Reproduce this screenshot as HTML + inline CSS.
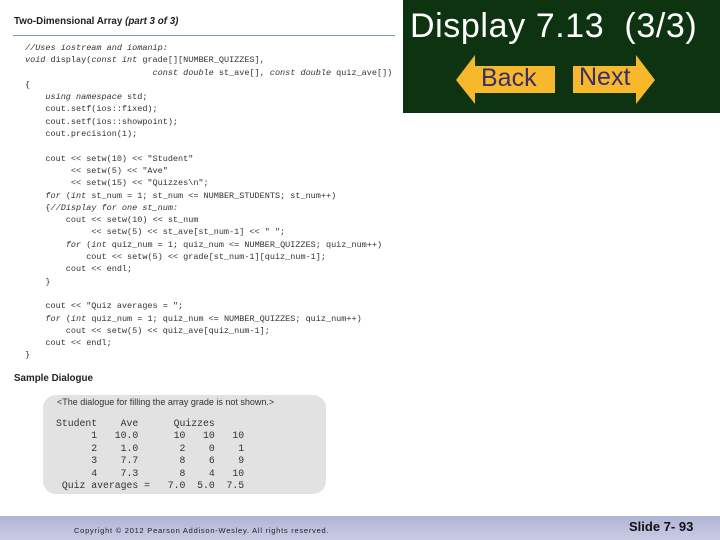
<!DOCTYPE html>
<html><head><style>
body{margin:0;width:720px;height:540px;position:relative;background:#fff;overflow:hidden;font-family:"Liberation Sans",sans-serif}
.c{position:absolute;font-family:"Liberation Mono",monospace;font-size:8.5px;color:#333;white-space:pre;line-height:12.3px}
.i{font-style:italic}
</style></head><body>
<div style="position:absolute;left:14px;top:16px;font-size:9.8px;font-weight:bold;color:#222">Two-Dimensional Array <i>(part 3 of 3)</i></div>
<div style="position:absolute;left:13px;top:35px;width:382px;height:1px;background:#6aa3ac"></div>
<div class="c" style="left:25px;top:42px"><span class="i">//Uses iostream and iomanip:</span>
<span class="i">void</span> display(<span class="i">const int</span> grade[][NUMBER_QUIZZES],
                         <span class="i">const double</span> st_ave[], <span class="i">const double</span> quiz_ave[])
{
    <span class="i">using namespace</span> std;
    cout.setf(ios::fixed);
    cout.setf(ios::showpoint);
    cout.precision(1);

    cout &lt;&lt; setw(10) &lt;&lt; "Student"
         &lt;&lt; setw(5) &lt;&lt; "Ave"
         &lt;&lt; setw(15) &lt;&lt; "Quizzes\n";
    <span class="i">for</span> (<span class="i">int</span> st_num = 1; st_num &lt;= NUMBER_STUDENTS; st_num++)
    {<span class="i">//Display for one st_num:</span>
        cout &lt;&lt; setw(10) &lt;&lt; st_num
             &lt;&lt; setw(5) &lt;&lt; st_ave[st_num-1] &lt;&lt; " ";
        <span class="i">for</span> (<span class="i">int</span> quiz_num = 1; quiz_num &lt;= NUMBER_QUIZZES; quiz_num++)
            cout &lt;&lt; setw(5) &lt;&lt; grade[st_num-1][quiz_num-1];
        cout &lt;&lt; endl;
    }

    cout &lt;&lt; "Quiz averages = ";
    <span class="i">for</span> (<span class="i">int</span> quiz_num = 1; quiz_num &lt;= NUMBER_QUIZZES; quiz_num++)
        cout &lt;&lt; setw(5) &lt;&lt; quiz_ave[quiz_num-1];
    cout &lt;&lt; endl;
}</div>
<div style="position:absolute;left:14px;top:373px;font-size:9.8px;font-weight:bold;color:#222">Sample Dialogue</div>
<div style="position:absolute;left:43px;top:395px;width:283px;height:99px;background:#e2e2e2;border-radius:13px"></div>
<div style="position:absolute;left:57px;top:397px;font-size:9px;color:#333">&lt;The dialogue for filling the array grade is not shown.&gt;</div>
<div class="c" style="left:56px;top:418px;font-size:9.8px;line-height:12.4px">Student    Ave      Quizzes
      1   10.0      10   10   10
      2    1.0       2    0    1
      3    7.7       8    6    9
      4    7.3       8    4   10
 Quiz averages =   7.0  5.0  7.5</div>
<div style="position:absolute;left:403px;top:0;width:317px;height:113px;background:#0d3311"></div>
<div style="position:absolute;left:410px;top:7px;font-size:34px;letter-spacing:0.6px;color:#fff;white-space:pre">Display 7.13  (3/3)</div>
<svg style="position:absolute;left:0;top:0" width="720" height="120">
<polygon points="456,80 475,55 475,66 555,66 555,93 475,93 475,104" fill="#f7b82b"/>
<polygon points="573,66 636,66 636,55 655,80 636,104 636,93 573,93" fill="#f7b82b"/>
</svg>
<div style="position:absolute;left:481px;top:64px;font-size:25px;color:#3a2f66">Back</div>
<div style="position:absolute;left:579px;top:63px;font-size:25px;color:#3a2f66">Next</div>
<div style="position:absolute;left:0;top:516px;width:720px;height:24px;background:linear-gradient(#b2b4d6,#c9cbe4)"></div>
<div style="position:absolute;left:74px;top:526px;font-size:7.5px;color:#222;letter-spacing:0.75px">Copyright © 2012 Pearson Addison-Wesley.  All rights reserved.</div>
<div style="position:absolute;left:629px;top:519px;font-size:13px;font-weight:bold;color:#111">Slide 7- 93</div>
</body></html>
